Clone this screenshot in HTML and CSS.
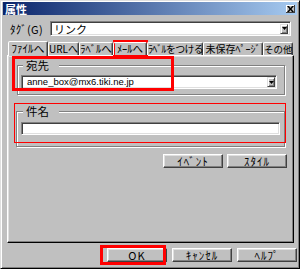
FILE: index.html
```html
<!DOCTYPE html>
<html lang="ja">
<head>
<meta charset="utf-8">
<link rel="stylesheet" href="styles.css">
</head>
<body>
<div class="window">
  <div class="titlebar">
    <span class="title">属性</span>
    <span class="close"><svg width="7" height="6" viewBox="0 0 7 6"><path d="M0 0h2l1.5 2 1.5-2h2l-2.5 3 2.5 3h-2l-1.5-2-1.5 2h-2l2.5-3z" fill="#000"/></svg></span>
  </div>
  <div class="tagrow">
    <span class="taglabel">ﾀｸﾞ(G)</span>
    <div class="combo">
      <span class="combotext">リンク</span>
      <span class="dropbtn"><svg width="5" height="3" viewBox="0 0 5 3"><path d="M0 0h5l-2.5 3z" fill="#000"/></svg></span>
    </div>
  </div>
  <div class="tabs">
    <span class="tab sel t1">ﾌｧｲﾙへ</span>
    <span class="tab t2">URLへ</span>
    <span class="tab t3">ﾗﾍﾞﾙへ</span>
    <span class="tab t4">ﾒｰﾙへ</span>
    <span class="tab t5">ﾗﾍﾞﾙをつける</span>
    <span class="tab t6">未保存ﾍﾟｰｼﾞ</span>
    <span class="tab t7">その他</span>
  </div>
  <div class="panel">
    <fieldset class="group g1">
      <legend>宛先</legend>
      <div class="select">
        <span class="seltext">anne_box@mx6.tiki.ne.jp</span>
        <span class="dropbtn"><svg width="5" height="3" viewBox="0 0 5 3"><path d="M0 0h5l-2.5 3z" fill="#000"/></svg></span>
      </div>
    </fieldset>
    <fieldset class="group g2">
      <legend>件名</legend>
      <div class="input"></div>
    </fieldset>
    <div class="panelbtns">
      <span class="btn">ｲﾍﾞﾝﾄ</span>
      <span class="btn">ｽﾀｲﾙ</span>
    </div>
  </div>
  <div class="footer">
    <span class="btn fbtn">OK</span>
    <span class="btn fbtn">ｷｬﾝｾﾙ</span>
    <span class="btn fbtn">ﾍﾙﾌﾟ</span>
  </div>
  <div class="mark m-tab"></div>
  <div class="mark m-to"></div>
  <div class="mark m-subj"></div>
  <div class="mark m-ok"></div>
</div>
</body>
</html>
```
FILE: styles.css
```css
* { box-sizing: border-box; }
html, body { margin: 0; padding: 0; background: #c0c0c0; }
body {
  font-family: "Noto Sans CJK JP", "Liberation Sans", sans-serif;
  font-size: 11px;
  line-height: 12px;
  color: #000;
}
.window {
  position: relative;
  width: 300px;
  height: 269px;
  background: #c0c0c0;
  border: 1px solid;
  border-color: #dfdfdf #000 #000 #dfdfdf;
  box-shadow: inset 1px 1px #fff, inset -1px -1px #808080;
  padding: 1px 2px 2px 2px;
  display: flex;
  flex-direction: column;
}
.titlebar {
  height: 13px;
  background: linear-gradient(to right, #0a246a, #a6caf0);
  display: flex;
  align-items: center;
  justify-content: space-between;
  padding: 0 2px 0 2px;
}
.title { color: #fff; font-weight: bold; font-size: 11px; line-height: 12px; }
.close {
  width: 9px; height: 8px;
  background: #c0c0c0;
  box-shadow: inset -1px -1px #404040, inset 1px 1px #fff;
  display: flex; align-items: center; justify-content: center;
}
.tagrow {
  display: flex;
  align-items: center;
  margin-top: 6px;
  height: 15px;
}
.taglabel { margin-left: 7px; width: 40px; letter-spacing: 0.3px; }
.combo {
  width: 241px;
  height: 15px;
  background: #fff;
  border: 1px solid;
  border-color: #808080 #fff #fff #808080;
  box-shadow: inset 1px 1px #404040, inset -1px -1px #dfdfdf;
  display: flex;
  align-items: center;
  justify-content: space-between;
  padding: 0 2px 0 3px;
}
.dropbtn {
  width: 8px; height: 10px;
  background: #c0c0c0;
  border: 1px solid; border-color: #dfdfdf #404040 #404040 #dfdfdf;
  box-shadow: inset 1px 1px #fff, inset -1px -1px #808080;
  display: flex; align-items: center; justify-content: center;
}
.tabs {
  display: flex;
  align-items: flex-end;
  margin-top: 5px;
  margin-left: 5px;
  height: 14px;
  position: relative;
  z-index: 1;
}
.tab {
  flex: none;
  height: 13px;
  padding: 0;
  border: 1px solid;
  border-bottom: none;
  border-color: #fff #404040 transparent #fff;
  border-radius: 2px 2px 0 0;
  box-shadow: inset -1px 0 #808080;
  white-space: nowrap;
  line-height: 12px;
  text-align: center;
  font-size: 10px;
}
.t1 { width: 40px; font-size: 11px; }
.t2 { width: 31px; }
.t3 { width: 34px; font-size: 10.5px; }
.t4 { width: 34px; font-size: 10.5px; }
.t5 { width: 56px; letter-spacing: -0.7px; }
.t6 { width: 60px; }
.t7 { width: 30px; font-size: 9.5px; }
.tab.sel { height: 15px; margin-bottom: -1px; background: #c0c0c0; }
.panel {
  margin-left: 4px;
  width: 287px;
  height: 188px;
  border: 1px solid;
  border-color: #fff #000 #000 #fff;
  box-shadow: inset -1px -1px #808080, inset 1px 1px #dfdfdf;
  padding: 3px 8px 0 9px;
  display: flex;
  flex-direction: column;
}
.group {
  margin: 0;
  border: 1px solid #808080;
  box-shadow: inset 1px 1px #fff, 1px 1px #fff;
  padding: 4px 3px 5px 3px;
  min-width: 0;
}
.group legend {
  padding: 0 10px 0 3px;
  margin-left: 2px;
  background: #c0c0c0;
  line-height: 12px;
  font-size: 11.5px;
}
.g2 { margin-top: 10px; padding: 5px 4px 11px 4px; margin-left: -1px; }
.select {
  height: 14px;
  background: #fff;
  border: 1px solid;
  border-color: #808080 #fff #fff #808080;
  box-shadow: inset 1px 1px #404040, inset -1px -1px #dfdfdf;
  display: flex;
  align-items: center;
  justify-content: space-between;
  padding: 0 1px 0 5px;
  margin-right: 4px;
}
.seltext { font-family: "Liberation Sans", sans-serif; font-size: 9.5px; }
.input {
  height: 13px;
  background: #fff;
  border: 1px solid;
  border-color: #808080 #fff #fff #808080;
  box-shadow: inset 1px 1px #404040, inset -1px -1px #dfdfdf;
}
.panelbtns {
  display: flex;
  justify-content: flex-end;
  gap: 4px;
  margin-top: 7px;
  margin-right: -2px;
}
.btn {
  width: 60px;
  height: 14px;
  background: #c0c0c0;
  border: 1px solid;
  border-color: #fff #404040 #404040 #fff;
  box-shadow: inset -1px -1px #808080, inset 1px 1px #dfdfdf;
  display: flex;
  align-items: center;
  justify-content: center;
  line-height: 12px;
  font-size: 11px;
  letter-spacing: 1px;
}
.footer {
  display: flex;
  justify-content: flex-end;
  gap: 5px;
  margin-top: 5px;
  padding-right: 0;
}
.mark {
  position: absolute;
  border: 3px solid #f00;
}
.m-tab { left: 112px; top: 39px; width: 35px; height: 17px; border-width: 2px; }
.m-to { left: 11px; top: 55px; width: 162px; height: 35px; }
.m-subj { left: 13px; top: 102px; width: 272px; height: 40px; border-width: 1px; }
.m-ok { left: 99px; top: 244px; width: 66px; height: 20px; }
```
